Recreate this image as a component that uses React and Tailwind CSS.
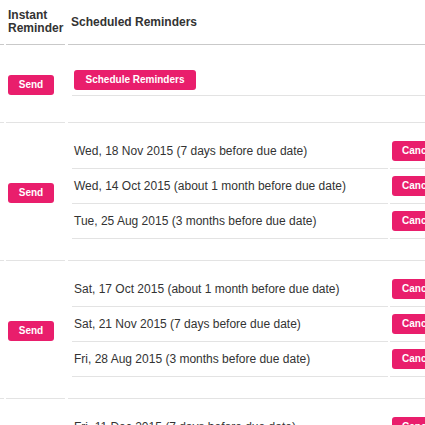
const reminderGroups = [
  [
    "Wed, 18 Nov 2015 (7 days before due date)",
    "Wed, 14 Oct 2015 (about 1 month before due date)",
    "Tue, 25 Aug 2015 (3 months before due date)",
  ],
  [
    "Sat, 17 Oct 2015 (about 1 month before due date)",
    "Sat, 21 Nov 2015 (7 days before due date)",
    "Fri, 28 Aug 2015 (3 months before due date)",
  ],
  [
    "Fri, 11 Dec 2015 (7 days before due date)",
    "Fri, 13 Nov 2015 (about 1 month before due date)",
    "Mon, 14 Sep 2015 (3 months before due date)",
  ],
];

const PinkButton = ({ children, className = "" }) => (
  <button
    className={`h-[20px] rounded-[3px] bg-[#e91e6c] text-white text-[10px] font-bold leading-[20px] px-[10px] whitespace-nowrap ${className}`}
  >
    {children}
  </button>
);

const Row = ({ className = "", borderColor = "border-[#e3e3e3]", left, right }) => (
  <div className={`flex ${className}`}>
    <div className={`w-[4px] shrink-0 border-b ${borderColor}`} />
    <div className={`w-[59px] shrink-0 ml-[2px] border-b ${borderColor} flex pl-[2px]`}>{left}</div>
    <div className={`flex-1 ml-[3px] border-b ${borderColor}`}>{right}</div>
  </div>
);

const ReminderLine = ({ text }) => (
  <div className="flex h-[35px]">
    <div className="w-[316px] shrink-0 border-b border-[#e3e3e3] flex items-center pl-[2px] whitespace-nowrap">
      {text}
    </div>
    <div className="flex-1 ml-[2px] border-b border-[#e3e3e3] flex items-center pl-[2px]">
      <PinkButton>Cancel</PinkButton>
    </div>
  </div>
);

export default function App() {
  return (
    <div
      className="w-full h-[425px] overflow-hidden bg-white text-[#333] text-[12px]"
      style={{ fontFamily: '"Liberation Sans", Arial, sans-serif' }}
    >
      <div className="w-[520px]">
        {/* Header */}
        <Row
          className="h-[45px]"
          borderColor="border-[#c9c9c9]"
          left={
            <div className="flex items-center font-bold leading-[13px]">
              Instant<br />Reminder
            </div>
          }
          right={
            <div className="h-full flex items-center pl-[3px] font-bold">Scheduled Reminders</div>
          }
        />

        {/* Schedule row */}
        <Row
          className="h-[78px]"
          left={<div className="pt-[30px]"><PinkButton className="w-[46px]">Send</PinkButton></div>}
          right={
            <div className="pt-[11px] pl-[4px]">
              <div className="h-[40px] border-b border-[#e3e3e3] flex items-end pb-[5px] pl-[2px]">
                <PinkButton className="w-[122px]">Schedule Reminders</PinkButton>
              </div>
            </div>
          }
        />

        {reminderGroups.map((group, i) => (
          <Row
            key={i}
            className="h-[138px]"
            left={
              <div className="flex items-center pt-[2px]">
                <PinkButton className="w-[46px]">Send</PinkButton>
              </div>
            }
            right={
              <div className="pt-[11px] pl-[4px]">
                {group.map((t) => (
                  <ReminderLine key={t} text={t} />
                ))}
              </div>
            }
          />
        ))}
      </div>
    </div>
  );
}
